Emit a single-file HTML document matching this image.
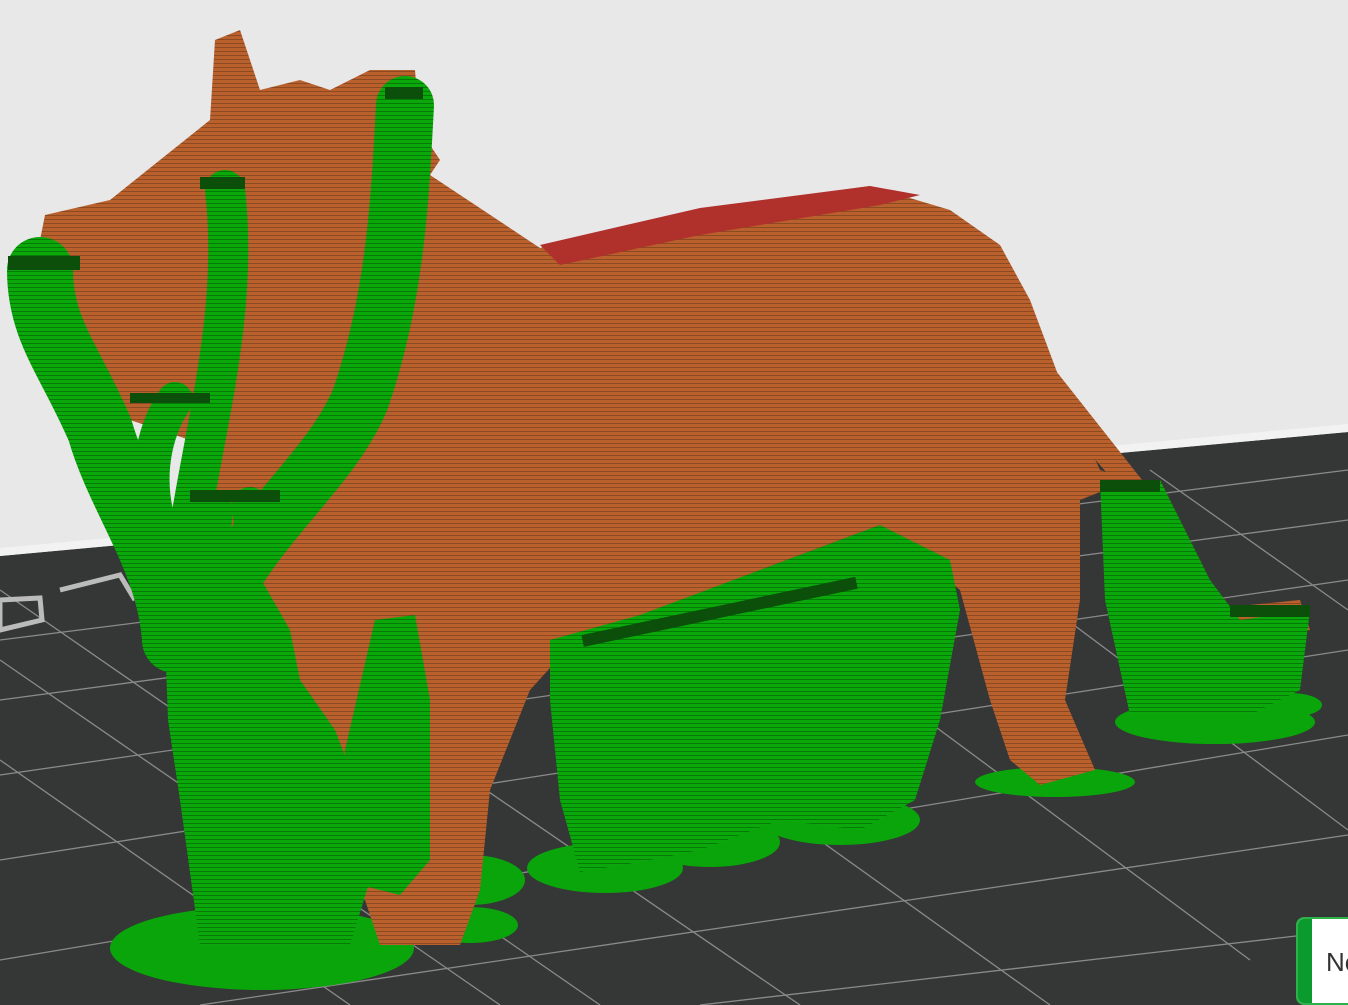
<!DOCTYPE html>
<html><head><meta charset="utf-8"><style>
html,body{margin:0;padding:0;width:1348px;height:1005px;overflow:hidden;background:#e8e8e8}
svg{display:block}
.btn{position:absolute;left:1296px;top:917px;width:70px;height:84px;border:2px solid #2eb04a;border-radius:8px;background:#fff;overflow:hidden}
.btn .bar{position:absolute;left:0;top:0;width:14px;height:100%;background:#0a9a2e}
.btn span{position:absolute;left:28px;top:28px;font:26px "Liberation Sans",sans-serif;color:#333}
</style></head><body>
<svg width="1348" height="1005" viewBox="0 0 1348 1005">
<defs>
<pattern id="lo" width="6" height="4" patternUnits="userSpaceOnUse"><rect width="6" height="4" fill="#b9602c"/><rect y="3" width="6" height="1" fill="#8c4a22"/></pattern>
<pattern id="lg" width="6" height="4" patternUnits="userSpaceOnUse"><rect width="6" height="4" fill="#0aa80a"/><rect y="3" width="6" height="1" fill="#067a06"/></pattern>
</defs>
<polygon points="0,556 1348,432 1348,1005 0,1005" fill="#353636"/>
<polygon points="0,548 1348,424 1348,432 0,556" fill="#f2f2f2"/>
<g stroke="#8a8a8a" stroke-width="1.3" fill="none">
<path d="M0,640 L1348,470 M0,700 L1348,520 M0,775 L1348,580 M0,860 L1348,650 M0,960 L1348,735 M200,1005 L1348,835 M700,1005 L1348,930"/>
<path d="M0,590 L600,1005 M0,660 L500,1005 M0,760 L350,1005 M150,560 L800,1005 M400,540 L1050,1005 M650,515 L1250,960 M900,495 L1348,830 M1150,470 L1348,610"/>
</g>
<path d="M0,600 L40,598 L42,620 L0,630 Z" fill="none" stroke="#bbb" stroke-width="5"/>
<path d="M60,590 L120,575 L135,600" fill="none" stroke="#bbb" stroke-width="5"/>
<g fill="#0aa50a">
<ellipse cx="262" cy="948" rx="152" ry="42"/>
<ellipse cx="470" cy="925" rx="48" ry="18"/>
<ellipse cx="470" cy="880" rx="55" ry="25"/>
<ellipse cx="605" cy="868" rx="78" ry="25"/>
<ellipse cx="710" cy="842" rx="70" ry="25"/>
<ellipse cx="840" cy="820" rx="80" ry="25"/>
<ellipse cx="1055" cy="782" rx="80" ry="15"/>
<ellipse cx="1215" cy="722" rx="100" ry="22"/>
<ellipse cx="1290" cy="705" rx="32" ry="12"/>
</g>
<g fill="url(#lo)">
<path d="M45,215 L110,200 L160,160 L210,120 L215,40 L240,30 L260,90 L300,80 L330,90 L370,70 L415,70 L420,130 L440,160 L430,175 L540,248 L700,210 L870,186 L950,210 L1000,245 L1030,300 L1060,380 L1100,470 L1130,480 L1080,500 L1080,600 L1065,700 L1095,770 L1040,785 L1010,760 L990,700 L960,590 L880,525 L760,570 L640,625 L580,635 L530,690 L490,790 L480,890 L460,945 L380,945 L365,900 L350,870 L330,780 L300,700 L270,620 L230,560 L210,500 L190,440 L130,420 L100,380 L80,330 L60,270 L40,240 Z"/>
<path d="M1000,300 L1150,490 L1130,500 L1010,360 Z"/>
<path d="M1200,610 L1300,600 L1310,630 L1230,640 Z"/>
<path d="M740,700 L800,740 L720,800 L660,810 L650,790 Z"/>
</g>
<path d="M540,245 L700,208 L870,186 L920,195 L880,205 L700,235 L560,265 Z" fill="#b0302c"/>
<g fill="url(#lg)">
<path d="M550,640 L640,615 L760,570 L880,525 L950,560 L960,610 L940,720 L915,800 L860,830 L780,820 L700,850 L640,862 L580,872 L560,800 L550,700 Z"/>
<path d="M1100,480 L1160,480 L1210,580 L1240,620 L1310,610 L1300,690 L1250,715 L1130,715 L1105,600 Z"/>
<path d="M200,945 L350,945 L370,880 L362,800 L335,730 L300,680 L290,630 L250,560 L180,560 L165,640 L168,720 L180,800 Z"/>
<path d="M340,880 L345,750 L375,620 L415,615 L430,700 L430,860 L400,895 Z"/>
</g>
<g stroke="url(#lg)" fill="none" stroke-linecap="round">
<path d="M175,640 C170,560 120,500 100,430 C70,360 40,330 40,270" stroke-width="66"/>
<path d="M220,600 C260,520 330,470 360,400 C395,300 400,200 405,105" stroke-width="58"/>
<path d="M185,560 C200,440 240,320 225,190" stroke-width="40"/>
<path d="M160,530 C140,470 160,420 175,400" stroke-width="36"/>
<path d="M215,510 L210,560 M250,505 L255,560" stroke-width="36"/>
</g>
<g fill="#0b4f0b">
<rect x="8" y="256" width="72" height="14"/><rect x="200" y="177" width="45" height="12"/><rect x="385" y="87" width="38" height="12"/>
<rect x="130" y="393" width="80" height="10"/><rect x="190" y="490" width="90" height="12"/><rect x="1100" y="480" width="60" height="12"/>
<rect x="1230" y="605" width="80" height="12"/><rect x="580" y="610" width="280" height="12" transform="rotate(-12 700 616)"/>
</g>
</svg>
<div class="btn"><div class="bar"></div><span>Ne</span></div>
</body></html>
